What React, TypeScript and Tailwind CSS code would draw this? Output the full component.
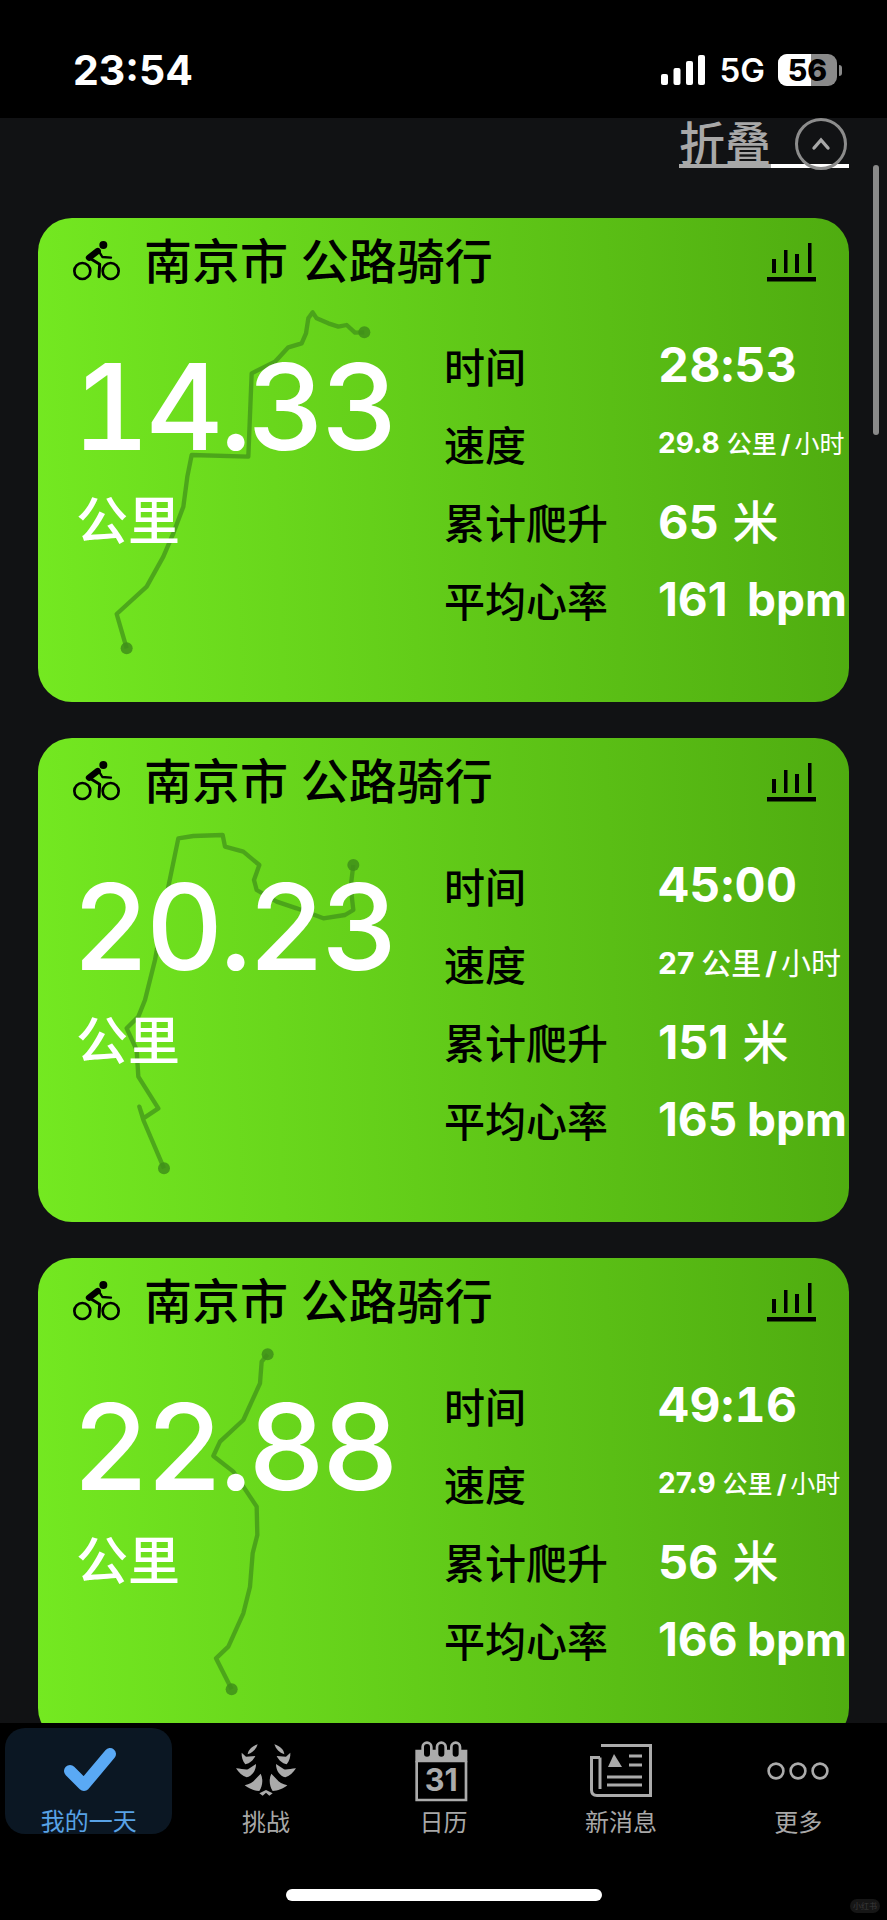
import type { ReactNode } from "react";

const cjk = "font-['Inter','Noto_Sans_CJK_SC',sans-serif]";

type Ride = {
  km: string;
  time: string;
  speed: string;
  climb: string;
  heart: string;
  speedSize: string;
  unitSize: string;
  route: string;
  start: [number, number];
  end: [number, number];
};

const rides: Ride[] = [
  {
    km: "14.33",
    time: "28:53",
    speed: "29.8",
    climb: "65",
    heart: "161",
    speedSize: "text-[28px]",
    unitSize: "text-[25px]",
    route:
      "M1003 367 L975 368 L950 345 L925 350 L895 340 L860 325 L848 307 L835 325 L828 370 L815 400 L775 412 L735 455 L665 490 L655 740 L485 735 L472 800 L460 890 L430 970 L400 1040 L350 1130 L260 1212 L290 1315",
    start: [1003, 367],
    end: [290, 1315],
  },
  {
    km: "20.23",
    time: "45:00",
    speed: "27",
    climb: "151",
    heart: "165",
    speedSize: "text-[30px]",
    unitSize: "text-[30px]",
    route:
      "M970 405 L962 470 L970 540 L945 555 L880 565 L800 535 L740 515 L680 480 L672 450 L688 405 L640 365 L585 350 L578 315 L490 318 L445 325 L415 470 L375 690 L345 810 L325 860 L290 895 L320 960 L325 1040 L385 1135 L340 1165 L328 1130 L340 1170 L402 1315",
    start: [970, 405],
    end: [402, 1315],
  },
  {
    km: "22.88",
    time: "49:16",
    speed: "27.9",
    climb: "56",
    heart: "166",
    speedSize: "text-[28px]",
    unitSize: "text-[25px]",
    route:
      "M713 313 L695 335 L690 400 L640 510 L570 575 L550 618 L610 665 L680 770 L682 855 L668 910 L660 1010 L640 1090 L595 1190 L558 1225 L605 1318",
    start: [713, 313],
    end: [605, 1318],
  },
];

function BikeIcon() {
  return (
    <svg width="70" height="55" viewBox="0 0 210 165" fill="none" stroke="#000" strokeLinecap="round" strokeLinejoin="round">
      <circle cx="52" cy="108" r="24" strokeWidth="8" />
      <circle cx="137" cy="108" r="24" strokeWidth="8" />
      <circle cx="115" cy="30" r="12" fill="#000" stroke="none" />
      <path d="M72 68 L98 48" strokeWidth="19" />
      <path d="M100 46 L112 66 L138 68" strokeWidth="7" />
      <path d="M72 68 L104 88 L102 125" strokeWidth="9" />
    </svg>
  );
}

function BarsIcon() {
  return (
    <svg width="50" height="40" viewBox="0 0 50 40" fill="#000">
      <rect x="5" y="16" width="4" height="14" />
      <rect x="17" y="7" width="3.5" height="23" />
      <rect x="28" y="11" width="4" height="19" />
      <rect x="41" y="0" width="3.5" height="30" />
      <rect x="0" y="34" width="49" height="4.5" />
    </svg>
  );
}

function StatRow({ label, children }: { label: string; children: ReactNode }) {
  return (
    <div className="grid h-[78px] grid-cols-[214px_1fr] items-center">
      <span className="text-[41px] font-medium leading-none text-black">{label}</span>
      <div className="flex items-baseline whitespace-nowrap pb-[6px] pr-[2px] font-bold leading-none text-white">{children}</div>
    </div>
  );
}

function RideCard({ ride }: { ride: Ride }) {
  return (
    <article className="relative h-[484px] shrink-0 rounded-[34px] bg-[linear-gradient(88deg,#74e921,#4fac10)]">
      {/* GPS track sits under the figures, drawn in 3x card units */}
      <svg className="absolute inset-0 h-full w-full" viewBox="24 24 2433 1452" fill="none">
        <path d={ride.route} stroke="#3f8f1a" strokeWidth="13" strokeOpacity="0.7" strokeLinejoin="round" />
        <circle cx={ride.start[0]} cy={ride.start[1]} r="18" fill="#3f8f1a" fillOpacity="0.85" />
        <circle cx={ride.end[0]} cy={ride.end[1]} r="18" fill="#3f8f1a" fillOpacity="0.85" />
      </svg>

      <div className="relative flex h-full flex-col">
        <header className="flex items-center pl-[27px] pr-[32px] pt-[17px]">
          <BikeIcon />
          <h2 className="ml-[9px] flex-1 pb-[2px] text-[48px] font-medium leading-[48px] text-black">南京市 公路骑行</h2>
          <BarsIcon />
        </header>

        <div className="flex pt-[57px]">
          <div className="w-[406px] shrink-0 pl-[34px] text-white">
            <div className="text-[120px] font-medium leading-[120px] tracking-[-4px] tabular-nums">{ride.km}</div>
            <div className="ml-[4px] mt-[29px] text-[52px] font-medium leading-none">公里</div>
          </div>
          <div className="-mt-[18px] flex-1">
            <StatRow label="时间">
              <span className="text-[48px] tracking-[0.5px] tabular-nums">{ride.time}</span>
            </StatRow>
            <StatRow label="速度">
              <span className={ride.speedSize}>{ride.speed}</span>
              <span className={`ml-[7px] font-medium ${ride.unitSize}`}>公里</span>
              <span className={`mx-[4px] ${ride.unitSize}`}>/</span>
              <span className={`font-normal ${ride.unitSize}`}>小时</span>
            </StatRow>
            <StatRow label="累计爬升">
              <span className="text-[47px]">{ride.climb}</span>
              <span className="ml-[14px] text-[46px] font-medium">米</span>
            </StatRow>
            <StatRow label="平均心率">
              <span className="text-[46px]">{ride.heart}</span>
              <span className="ml-auto text-[46px]">bpm</span>
            </StatRow>
          </div>
        </div>
      </div>
    </article>
  );
}

function StatusBar() {
  return (
    <div className="flex h-[118px] shrink-0 items-center justify-between bg-black pl-[73px] pr-[45px] pt-[22px] text-white">
      <span className="text-[41px] font-bold leading-none">23:54</span>
      <div className="flex items-center">
        <svg width="44" height="30" viewBox="0 0 44 30" fill="#fff">
          <rect x="0" y="19" width="7" height="11" rx="2" />
          <rect x="12.5" y="13" width="7" height="17" rx="2" />
          <rect x="25" y="6" width="7" height="24" rx="2" />
          <rect x="37" y="0" width="7" height="30" rx="2" />
        </svg>
        <span className="ml-[15px] text-[33px] font-semibold leading-none">5G</span>
        <div className="relative ml-[13px] flex h-[32px] w-[59px] items-center justify-center overflow-hidden rounded-[9px] bg-[#8a8a8a]">
          <div className="absolute inset-y-0 left-0 w-[33px] bg-white" />
          <span className="relative text-[30px] font-extrabold leading-none text-black">56</span>
        </div>
        <div className="ml-[2px] h-[11px] w-[3px] rounded-r-full bg-[#8a8a8a]" />
      </div>
    </div>
  );
}

function Laurel() {
  const half = (
    <>
      <path d="M95 25 C90 40 80 50 65 55 C66 42 78 30 95 25 Z" />
      <path d="M47 50 L60 62 L88 60 C82 72 72 82 58 85 C50 75 46 62 47 50 Z" />
      <path d="M30 97 C45 98 58 102 66 100 L90 84 C90 105 78 120 62 124 C50 120 38 110 30 97 Z" />
      <path d="M56 148 C70 145 82 138 88 130 L104 113 C112 130 110 150 100 165 C85 165 68 158 56 148 Z" />
    </>
  );
  return (
    <svg width="80" height="70" viewBox="0 0 240 210" fill="#ababab">
      {half}
      <g transform="translate(240 0) scale(-1 1)">{half}</g>
      <path d="M120 162 L140 172 L130 179 L120 170 L110 179 L100 172 Z" />
    </svg>
  );
}

function CalendarIcon() {
  return (
    <svg width="70" height="75" viewBox="0 0 210 225" fill="none">
      <path d="M22 50 H178 V88 H22 Z" fill="#ababab" />
      <path d="M26 85 V201 H174 V85" stroke="#ababab" strokeWidth="8" />
      {[44, 87, 130].map((x) => (
        <rect key={x} x={x} y="29" width="26" height="46" rx="13" fill="#000" stroke="#ababab" strokeWidth="8" />
      ))}
      <text x="100" y="175" textAnchor="middle" fill="#ababab" fontSize="92" fontWeight="700" fontFamily="Inter, sans-serif">
        31
      </text>
    </svg>
  );
}

function NewsIcon() {
  return (
    <svg width="62" height="53" viewBox="0 0 62 53" fill="none" stroke="#ababab" strokeWidth="3">
      <path d="M11 1.5 H60.5 V51.5 H7 C3.5 51.5 1.5 49.5 1.5 46 V13.5 H10" />
      <path d="M10 13.5 V45" />
      <path d="M23 10 L31 23 H17 Z" fill="#ababab" stroke="none" transform="translate(1 0)" />
      <path d="M39 12 H52 M39 21 H52 M17 33 H52 M17 41 H52" />
    </svg>
  );
}

function TabBar() {
  const tabs = [
    { label: "挑战", icon: <Laurel /> },
    { label: "日历", icon: <CalendarIcon /> },
    { label: "新消息", icon: <NewsIcon /> },
    {
      label: "更多",
      icon: (
        <svg width="62" height="18" viewBox="0 0 62 18" fill="none" stroke="#ababab" strokeWidth="2.6">
          <circle cx="9" cy="9" r="7.4" />
          <circle cx="31" cy="9" r="7.4" />
          <circle cx="53" cy="9" r="7.4" />
        </svg>
      ),
    },
  ];
  return (
    <nav className="relative h-[197px] shrink-0 bg-black">
      <div className="grid grid-cols-5">
        <div className="mx-[5px] mt-[5px] flex h-[106px] flex-col items-center rounded-[20px] bg-[#0b1723] pt-[16px]">
          <svg width="60" height="50" viewBox="0 0 60 50">
            <path d="M11 27 L25 41 L51 10" fill="none" stroke="#5aa9f5" strokeWidth="12" strokeLinecap="round" strokeLinejoin="round" />
          </svg>
          <span className="mt-[16px] text-[24px] leading-[24px] text-[#58a2e6]">我的一天</span>
        </div>
        {tabs.map((tab) => (
          <div key={tab.label} className="relative flex h-[115px] flex-col items-center">
            <div className="flex h-[88px] items-center pt-[7px]">{tab.icon}</div>
            <span className="text-[24px] leading-[24px] text-[#a8a8a8]">{tab.label}</span>
          </div>
        ))}
      </div>
      <div className="mx-auto mt-[51px] h-[12px] w-[316px] rounded-full bg-white" />
      <div className="absolute bottom-[7px] right-[7px] flex h-[14px] w-[30px] items-center justify-center rounded-full bg-[#161616] text-[8px] text-[#3a3a3a]">
        小红书
      </div>
    </nav>
  );
}

export default function App() {
  return (
    <div className={`flex h-[1920px] w-[887px] flex-col bg-black ${cjk}`}>
      <StatusBar />
      <main className="relative min-h-0 flex-1 overflow-hidden bg-[#111214] px-[38px]">
        <div className="flex h-[100px] justify-end pt-[4px]">
          <div className="flex h-[46px] items-start">
            <span className="border-b-[4px] border-[#a8a8a8] text-[46px] font-medium leading-[42px] text-[#a8a8a8]">折叠</span>
            <span className="relative h-[46px] w-[78px] border-b-[4px] border-white">
              <span className="absolute -top-[4px] left-[24px] flex h-[52px] w-[52px] items-center justify-center rounded-full border-[3px] border-[#8c8c8c]">
                <svg width="20" height="14" viewBox="0 0 20 14" fill="none" stroke="#a8a8a8" strokeWidth="3.4" strokeLinecap="round">
                  <path d="M3 11 L10 3 L17 11" />
                </svg>
              </span>
            </span>
          </div>
        </div>
        {/* scroll indicator */}
        <div className="absolute right-[8px] top-[47px] h-[270px] w-[6px] rounded-full bg-[#8a8a8a]" />
        <div className="flex flex-col gap-[36px]">
          {rides.map((ride) => (
            <RideCard key={ride.km} ride={ride} />
          ))}
        </div>
      </main>
      <TabBar />
    </div>
  );
}
